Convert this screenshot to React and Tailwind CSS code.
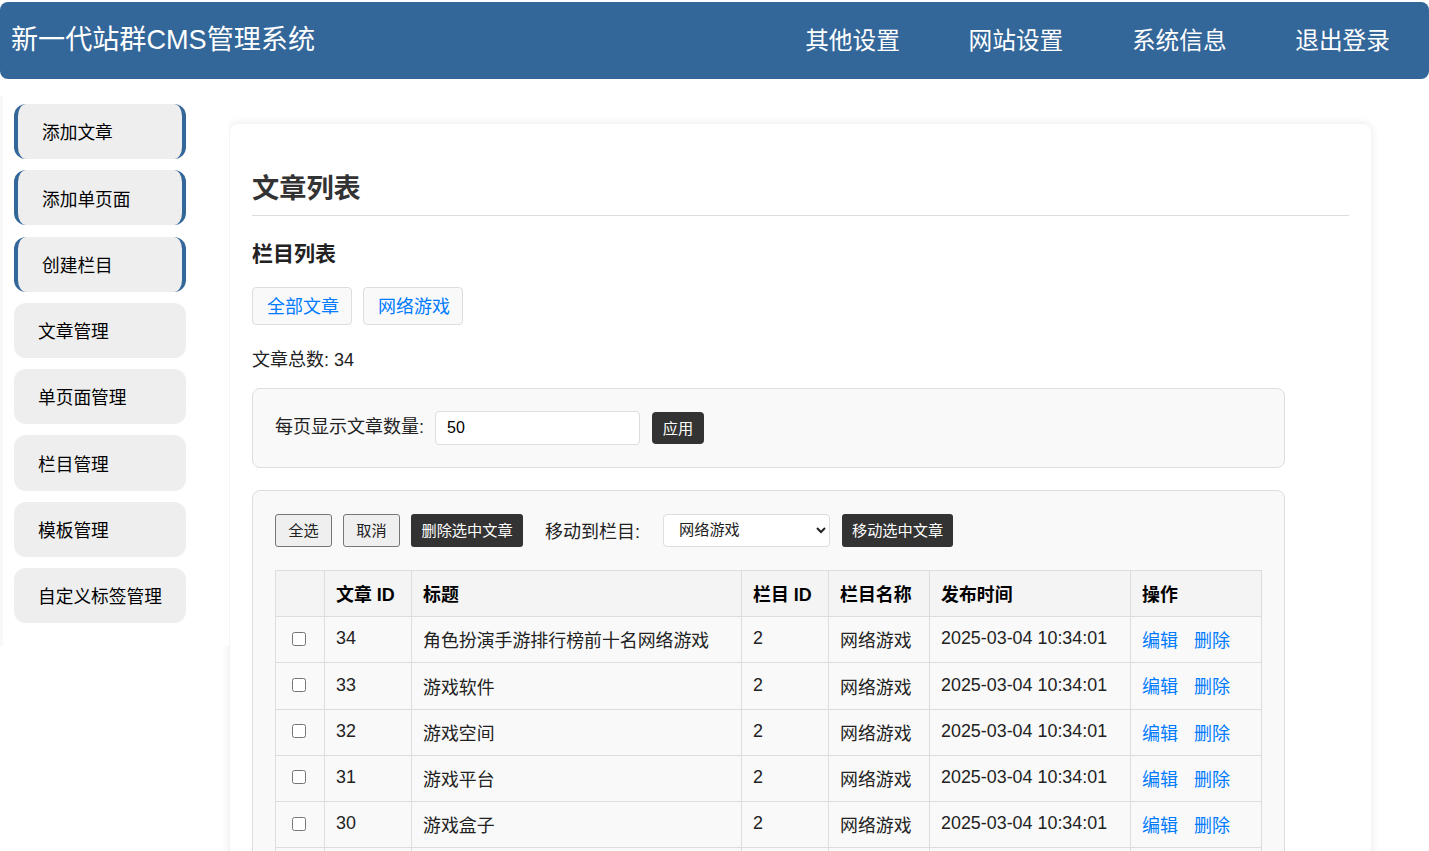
const topNav = ['其他设置', '网站设置', '系统信息', '退出登录']

const sideItems = [
  { label: '添加文章', accent: true },
  { label: '添加单页面', accent: true },
  { label: '创建栏目', accent: true },
  { label: '文章管理' },
  { label: '单页面管理' },
  { label: '栏目管理' },
  { label: '模板管理' },
  { label: '自定义标签管理' },
]

const rows = [
  { id: 34, title: '角色扮演手游排行榜前十名网络游戏' },
  { id: 33, title: '游戏软件' },
  { id: 32, title: '游戏空间' },
  { id: 31, title: '游戏平台' },
  { id: 30, title: '游戏盒子' },
]

const thClass = 'border border-[#ddd] bg-[#f4f4f4] px-[11px] pt-[4px] text-left font-bold text-black'
const tdClass = 'border border-[#ddd] px-[11px] pt-[4px]'
// latin cells sit a little higher than the chinese ones
const numClass = 'border border-[#ddd] px-[11px] pb-[2px]'

export default function App() {
  return (
    <div className="h-[851px] overflow-hidden bg-white pt-[2px] font-['Liberation_Sans','Noto_Sans_CJK_SC',sans-serif] text-[17.9px] text-[#222]">
      {/* Top bar */}
      <header className="flex h-[77px] items-center justify-between rounded-lg bg-[#336699] pl-[11px] pr-[39px] text-white">
        <h1 className="pb-[1px] text-[27.1px] font-normal">新一代站群CMS管理系统</h1>
        <nav className="flex gap-[68.6px] pt-[3px] text-[23.7px]">
          {topNav.map((item) => (
            <a key={item}>{item}</a>
          ))}
        </nav>
      </header>

      <div className="flex items-start">
        {/* Sidebar */}
        <aside className="relative z-10 mt-[17px] flex h-[550px] w-[229px] flex-col gap-[11.1px] border-l-[3px] border-[#f8f8f8] bg-white pl-[11px] pt-[8px]">
          {sideItems.map((item) => (
            <a
              key={item.label}
              className={
                item.accent
                  ? 'flex h-[55.2px] w-[172px] items-center rounded-xl border-x-4 border-[#336699] bg-[#eee] pl-[24px] pt-[4px] text-[17.7px] text-black'
                  : 'flex h-[55.2px] w-[172px] items-center rounded-xl bg-[#eee] pl-[24px] pt-[4px] text-[17.7px] text-black'
              }
            >
              {item.label}
            </a>
          ))}
        </aside>

        {/* Main card */}
        <main className="ml-[1px] mt-[45px] w-[1141px] rounded-lg bg-white px-[22px] pt-[46px] shadow-[0_0_10px_rgba(0,0,0,0.1)]">
          <h2 className="border-b border-[#ddd] pb-[7px] text-[27.2px] font-bold leading-[38px] text-[#333]">文章列表</h2>
          <h3 className="mt-[22px] text-[21px] font-bold leading-[32px] text-[#222]">栏目列表</h3>

          <div className="mt-[17px] flex gap-[11px]">
            <a className="flex h-[38px] items-center rounded border border-[#ddd] bg-[#f9f9f9] pl-[14px] pr-[12px] pt-[2px] text-[18px] text-[#007bff]">全部文章</a>
            <a className="flex h-[38px] items-center rounded border border-[#ddd] bg-[#f9f9f9] pl-[14px] pr-[12px] pt-[2px] text-[18px] text-[#007bff]">网络游戏</a>
          </div>

          <p className="mt-[21px] text-[18px] leading-[28px]">文章总数: 34</p>

          {/* Page size form */}
          <div className="mt-[14px] flex h-[80px] w-[1033px] items-center rounded-lg border border-[#ddd] bg-[#f9f9f9] px-[22px]">
            <label className="pb-[2px] text-[18px]">每页显示文章数量:</label>
            <input
              readOnly
              value="50"
              className="ml-[11px] h-[34px] w-[205px] rounded border border-[#ddd] bg-white px-[11px] text-[16px] text-black"
            />
            <button className="ml-[12px] h-[32px] w-[52px] rounded bg-[#333] pt-[2px] text-[15.2px] text-white">应用</button>
          </div>

          {/* Article list */}
          <div className="mt-[22px] w-[1033px] rounded-lg border border-[#ddd] bg-[#f9f9f9] px-[22px] pt-[23px]">
            <div className="flex h-[33px] items-center">
              <button className="h-[33px] w-[57px] rounded-[3px] border border-[#767676] bg-[#efefef] pt-[2px] text-[15.2px] text-[#222]">全选</button>
              <button className="ml-[11px] h-[33px] w-[57px] rounded-[3px] border border-[#767676] bg-[#efefef] pt-[2px] text-[15.2px] text-[#222]">取消</button>
              <button className="ml-[11px] h-[33px] w-[112px] rounded-[3px] bg-[#333] pt-[2px] text-[15.2px] text-white">删除选中文章</button>
              <label className="ml-[22px] pt-[3px] text-[18px]">移动到栏目:</label>
              <select className="ml-[23px] h-[33px] w-[167px] rounded border border-[#ddd] bg-white pb-[2px] pl-[11px] text-[15.2px] text-[#222]">
                <option>网络游戏</option>
              </select>
              <button className="ml-[12px] h-[33px] w-[111px] rounded-[3px] bg-[#333] pt-[2px] text-[15.2px] text-white">移动选中文章</button>
            </div>

            <table className="mt-[23px] w-[986px] table-fixed border-collapse">
              <colgroup>
                <col className="w-[49px]" />
                <col className="w-[87px]" />
                <col className="w-[330px]" />
                <col className="w-[87px]" />
                <col className="w-[101px]" />
                <col className="w-[201px]" />
                <col className="w-[131px]" />
              </colgroup>
              <thead>
                <tr className="h-[46.2px]">
                  <th className={thClass}></th>
                  <th className={thClass}>文章 ID</th>
                  <th className={thClass}>标题</th>
                  <th className={thClass}>栏目 ID</th>
                  <th className={thClass}>栏目名称</th>
                  <th className={thClass}>发布时间</th>
                  <th className={thClass}>操作</th>
                </tr>
              </thead>
              <tbody>
                {rows.map((row) => (
                  <tr key={row.id} className="h-[46.2px]">
                    <td className={numClass}>
                      <input type="checkbox" className="block h-[14px] w-[14px] translate-x-[5px]" />
                    </td>
                    <td className={numClass}>{row.id}</td>
                    <td className={tdClass}>{row.title}</td>
                    <td className={numClass}>2</td>
                    <td className={tdClass}>网络游戏</td>
                    <td className={numClass}>2025-03-04 10:34:01</td>
                    <td className={tdClass}>
                      <a className="text-[18px] text-[#007bff]">编辑</a>
                      <a className="ml-[16px] text-[18px] text-[#007bff]">删除</a>
                    </td>
                  </tr>
                ))}
                {/* next row only shows its top edge above the fold */}
                <tr className="h-[46.2px]">
                  {[0, 1, 2, 3, 4, 5, 6].map((n) => (
                    <td key={n} className={tdClass}></td>
                  ))}
                </tr>
              </tbody>
            </table>
          </div>
        </main>
      </div>
    </div>
  )
}
